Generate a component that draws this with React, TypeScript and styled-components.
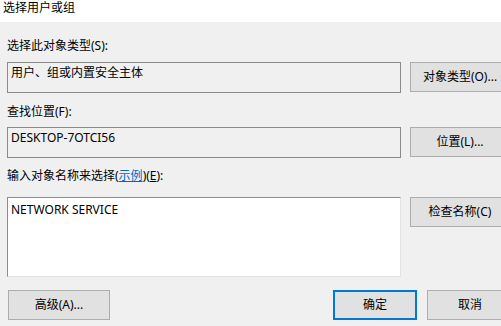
import React from 'react';
import styled, { createGlobalStyle } from 'styled-components';

const GlobalStyle = createGlobalStyle`
  html, body {
    margin: 0;
    padding: 0;
    background: #f0f0f0;
  }
  body {
    font-family: 'Noto Sans', 'Noto Sans CJK SC', sans-serif;
    font-size: 12px;
    color: #000;
  }
`;

const Window = styled.div`
  width: 501px;
  height: 326px;
  overflow: hidden;
  background: #f0f0f0;
`;

const TitleBar = styled.div`
  height: 22px;
  background: #fff;
  padding-left: 3px;
  font-size: 12px;
  line-height: 15px;
`;

const Body = styled.div`
  padding-left: 7px;
  display: flex;
  flex-direction: column;
`;

const Label = styled.div<{ $top: number; $bottom: number }>`
  height: 16px;
  line-height: 16px;
  margin-top: ${(p) => p.$top}px;
  margin-bottom: ${(p) => p.$bottom}px;
  white-space: nowrap;

  a {
    color: #0066cc;
    text-decoration: underline;
  }

  u {
    text-decoration: underline;
  }
`;

const Row = styled.div`
  display: flex;
  align-items: flex-start;
  gap: 9px;
`;

const Field = styled.div`
  box-sizing: border-box;
  flex: none;
  width: 394px;
  height: 31px;
  border: 1px solid #8a8a8a;
  background: #f0f0f0;
  padding: 2px 3px;
  line-height: 16px;
  white-space: nowrap;
`;

const NameBox = styled.div`
  box-sizing: border-box;
  flex: none;
  width: 394px;
  height: 80px;
  background: #fff;
  border-style: solid;
  border-width: 1px;
  border-color: #8c8c8c #e3e3e3 #e3e3e3 #8c8c8c;
  padding: 4px 3px;
  line-height: 16px;
`;

const Button = styled.button<{ $width: number; $default?: boolean }>`
  box-sizing: border-box;
  flex: none;
  width: ${(p) => p.$width}px;
  height: 30px;
  margin: 0;
  padding: 0;
  font: inherit;
  color: #000;
  background: #e1e1e1;
  border: ${(p) => (p.$default ? '2px solid #0078d7' : '1px solid #adadad')};
  white-space: nowrap;
  line-height: 16px;
`;

const Footer = styled.div`
  display: flex;
  align-items: center;
  margin-top: 13px;
  padding-left: 1px;
`;

const Spacer = styled.div`
  flex: 1;
`;

const FooterGroup = styled.div`
  display: flex;
  gap: 10px;
  margin-right: -12px;
`;

export default function App() {
  return (
    <Window>
      <GlobalStyle />
      <TitleBar>选择用户或组</TitleBar>
      <Body>
        <Label $top={16} $bottom={8}>选择此对象类型(S):</Label>
        <Row>
          <Field>用户、组或内置安全主体</Field>
          <Button $width={100}>对象类型(O)...</Button>
        </Row>
        <Label $top={11} $bottom={7}>查找位置(F):</Label>
        <Row>
          <Field>DESKTOP-7OTCI56</Field>
          <Button $width={100}>位置(L)...</Button>
        </Row>
        <Label $top={10} $bottom={13}>
          输入对象名称来选择(<a>示例</a>)(<u>E</u>):
        </Label>
        <Row>
          <NameBox>NETWORK SERVICE</NameBox>
          <Button $width={100}>检查名称(C)</Button>
        </Row>
        <Footer>
          <Button $width={102}>高级(A)...</Button>
          <Spacer />
          <FooterGroup>
            <Button $width={84} $default>
              确定
            </Button>
            <Button $width={86}>取消</Button>
          </FooterGroup>
        </Footer>
      </Body>
    </Window>
  );
}
